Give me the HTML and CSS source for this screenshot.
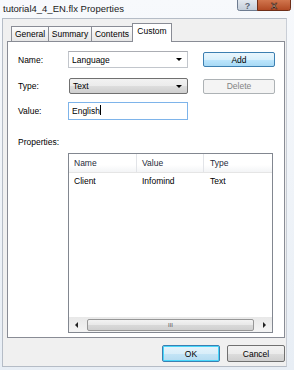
FILE: index.html
```html
<!DOCTYPE html>
<html lang="en">
<head>
    <meta charset="UTF-8">
    <meta name="viewport" content="width=device-width, initial-scale=1.0">
    <title>tutorial4_4_EN.flx Properties</title>
    <link rel="stylesheet" href="styles.css">
</head>
<body>
    <div class="window">
        <!-- Title bar -->
        <div class="titlebar">
            <span class="caption">tutorial4_4_EN.flx Properties</span>
            <svg class="caption-buttons" width="54" height="12" viewBox="0 0 54 12">
                <defs>
                    <linearGradient id="helpGrad" x1="0" y1="0" x2="0" y2="1">
                        <stop offset="0" stop-color="#e6ebf1"/>
                        <stop offset="1" stop-color="#c2ccd8"/>
                    </linearGradient>
                    <linearGradient id="closeGrad" x1="0" y1="0" x2="0" y2="1">
                        <stop offset="0" stop-color="#d47a52"/>
                        <stop offset="1" stop-color="#b04822"/>
                    </linearGradient>
                </defs>
                <path d="M0.5 -1 V8.5 Q0.5 10.5 2.5 10.5 H20.5 V-1" fill="url(#helpGrad)" stroke="#6d7b90"/>
                <path d="M20.5 -1 V10.5 H51.5 Q53.5 10.5 53.5 8.5 V-1" fill="url(#closeGrad)" stroke="#6e2e18"/>
                <text x="10.5" y="8.5" text-anchor="middle" font-family="Liberation Sans, sans-serif" font-size="9" font-weight="bold" fill="#5a6474">?</text>
                <text x="37" y="8.5" text-anchor="middle" font-family="Liberation Sans, sans-serif" font-size="9" font-weight="bold" fill="#f4e6dc" stroke="#3a1206" stroke-width="0.6">X</text>
            </svg>
        </div>

        <div class="client">
            <!-- Tabs -->
            <div class="tabs">
                <div class="tab tab-general">General</div>
                <div class="tab tab-summary">Summary</div>
                <div class="tab tab-contents">Contents</div>
                <div class="tab tab-custom selected">Custom</div>
            </div>

            <div class="panel">
                <div class="row row-name">
                    <label class="label">Name:</label>
                    <div class="combo">
                        <span>Language</span>
                        <span class="arrow"></span>
                    </div>
                    <button class="btn btn-hot">Add</button>
                </div>
                <div class="row row-type">
                    <label class="label">Type:</label>
                    <div class="combo combo-list">
                        <span>Text</span>
                        <span class="arrow"></span>
                    </div>
                    <button class="btn btn-disabled">Delete</button>
                </div>
                <div class="row row-value">
                    <label class="label">Value:</label>
                    <div class="textbox">English<span class="caret"></span></div>
                </div>

                <div class="props-label">Properties:</div>

                <div class="listview">
                    <div class="lv-header">
                        <div class="col col-name">Name</div>
                        <div class="col col-value">Value</div>
                        <div class="col col-type">Type</div>
                    </div>
                    <div class="lv-body">
                        <div class="lv-row">
                            <div class="col col-name">Client</div>
                            <div class="col col-value">Infomind</div>
                            <div class="col col-type">Text</div>
                        </div>
                    </div>
                    <div class="hscroll">
                        <span class="sb-arrow left"></span>
                        <div class="sb-thumb"><span class="grip">III</span></div>
                        <span class="sb-arrow right"></span>
                    </div>
                </div>
            </div>

            <div class="dialog-buttons">
                <button class="btn btn-default">OK</button>
                <button class="btn">Cancel</button>
            </div>
        </div>
    </div>
</body>
</html>
```

FILE: styles.css
```css
* {
    box-sizing: border-box;
}
body {
    margin: 0;
    padding: 0;
    background: #e9eff6;
    font-family: "Liberation Sans", Arial, sans-serif;
    font-size: 8.5px;
    color: #000;
}
.window {
    width: 294px;
    height: 370px;
    padding: 0 7px 3px 2px;
    background: linear-gradient(#f7f9fc, #e8eef5);
    overflow: hidden;
}
.titlebar {
    height: 18px;
    display: flex;
    justify-content: space-between;
    align-items: flex-start;
}
.caption {
    font-size: 9.5px;
    line-height: 17px;
    padding-left: 1px;
    color: #1a1a1a;
}
.caption-buttons {
    display: block;
    flex-shrink: 0;
    margin-right: -4px;
}
.client {
    height: 349px;
    background: #f0f0f0;
    border: 1px solid #b5bcc6;
    border-right-color: #c9ced6;
    padding: 4px 1px 0 4px;
}

/* Tabs */
.tabs {
    display: flex;
    align-items: flex-end;
    height: 18px;
    padding-left: 4px;
    position: relative;
    z-index: 1;
}
.tab {
    height: 15px;
    margin-right: -1px;
    border: 1px solid #898c95;
    border-bottom: none;
    background: linear-gradient(#fdfdfd, #e6e6e6);
    text-align: center;
    line-height: 15px;
    font-size: 8.5px;
}
.tab-general { width: 38px; }
.tab-summary { width: 44px; }
.tab-contents { width: 42px; }
.tab.selected {
    width: 40px;
    height: 19px;
    margin-bottom: -1px;
    background: #fff;
    line-height: 15px;
}

.panel {
    width: 278px;
    height: 297px;
    background: #fff;
    border: 1px solid #898c95;
    padding: 9px 0 0 10px;
}
.row {
    display: flex;
    align-items: center;
}
.row-type {
    margin-top: 10px;
}
.row-value {
    margin-top: 8px;
}
.label {
    width: 50px;
}
.combo {
    width: 120px;
    height: 17px;
    border: 1px solid #c2c6cc;
    border-top-color: #abadb3;
    padding: 0 4px 0 3px;
    display: flex;
    justify-content: space-between;
    align-items: center;
    background: #fff;
}
.combo-list {
    height: 16px;
    margin-left: 1px;
    width: 119px;
    border: 1px solid #707070;
    border-radius: 2px;
    background: linear-gradient(#f2f2f2 0%, #ebebeb 50%, #dddddd 51%, #cfcfcf 100%);
}
.arrow {
    width: 0;
    height: 0;
    border-left: 3px solid transparent;
    border-right: 3px solid transparent;
    border-top: 3px solid #000;
    margin-right: 1px;
}
.textbox {
    width: 120px;
    height: 18px;
    border: 1px solid #7eb4ea;
    padding-left: 3px;
    line-height: 16px;
    background: #fff;
}
.caret {
    display: inline-block;
    width: 1px;
    height: 10px;
    background: #000;
    vertical-align: -1px;
}
.btn {
    font-family: "Liberation Sans", Arial, sans-serif;
    font-size: 8.5px;
    color: #000;
    width: 58px;
    height: 17px;
    padding: 0;
    border: 1px solid #707070;
    border-radius: 2px;
    background: linear-gradient(#f2f2f2 0%, #ebebeb 50%, #dddddd 51%, #cfcfcf 100%);
}
.row .btn {
    width: 72px;
    height: 15px;
    margin-left: 15px;
}
.btn-hot {
    border-color: #3c7fb1;
    background: linear-gradient(#eaf6fd 0%, #d9f0fc 50%, #bee6fd 51%, #a7d9f5 100%);
}
.btn-disabled {
    border-color: #adb2b5;
    background: #f4f4f4;
    color: #838383;
}
.btn-default {
    border-color: #3c7fb1;
    box-shadow: inset 0 0 0 1px #48d7fb;
    background: linear-gradient(#e5f4fc 0%, #d9eef9 50%, #c4e5f6 51%, #b5dbf1 100%);
}

.props-label {
    margin-top: 17px;
    line-height: 10px;
}
.listview {
    width: 205px;
    height: 180px;
    margin: 6px 0 0 50px;
    border: 1px solid #828790;
    display: flex;
    flex-direction: column;
}
.lv-header {
    display: flex;
    height: 19px;
    line-height: 19px;
    background: linear-gradient(#fff 0%, #fff 60%, #f3f4f6 100%);
    border-bottom: 1px solid #e5e5e5;
    color: #1e2a3a;
}
.lv-header .col {
    border-right: 1px solid #e2e4e8;
}
.col {
    padding-left: 5px;
}
.col-name { width: 68px; }
.col-value { width: 67px; }
.col-type { flex: 1; padding-left: 6px; }
.lv-header .col-type { border-right: none; }
.lv-body {
    flex: 1;
}
.lv-row {
    display: flex;
    height: 16px;
    line-height: 16px;
}
.hscroll {
    height: 15px;
    display: flex;
    align-items: center;
    background: linear-gradient(#e8e8e8, #f4f4f4);
    padding: 0 2px;
}
.sb-arrow {
    width: 0;
    height: 0;
    border-top: 3px solid transparent;
    border-bottom: 3px solid transparent;
}
.sb-arrow.left {
    border-right: 3px solid #222;
    margin: 0 9px 0 4px;
}
.sb-arrow.right {
    border-left: 3px solid #222;
    margin: 0 4px 0 9px;
}
.sb-thumb {
    flex: 1;
    height: 12px;
    border: 1px solid #979797;
    border-radius: 2px;
    background: linear-gradient(#f3f3f3 0%, #e8e8e8 50%, #d9d9d9 51%, #d0d0d0 100%);
    text-align: center;
    font-size: 6px;
    line-height: 10px;
    color: #555;
}
.dialog-buttons {
    display: flex;
    justify-content: flex-end;
    gap: 7px;
    margin-top: 7px;
    padding-right: 0;
}
```
